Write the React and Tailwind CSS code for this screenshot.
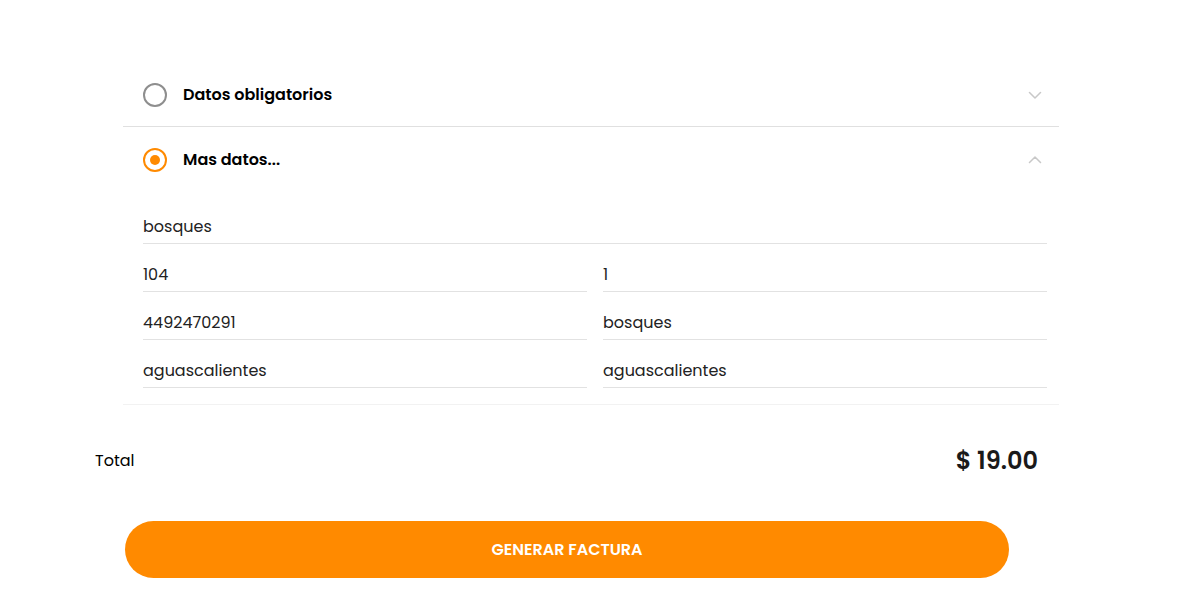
import React, { useState } from 'react'

const font = { fontFamily: '"Poppins", "Inter", "Noto Sans", sans-serif' }

function Chevron({ up }){
return (
<svg width="14" height="8" viewBox="0 0 14 8" fill="none" stroke="#c8c8c8" strokeWidth="1.5" strokeLinecap="round" strokeLinejoin="round">
{up ? <path d="M1.5 6.5l5.5-5.5 5.5 5.5" /> : <path d="M1.5 1.5l5.5 5.5 5.5-5.5" />}
</svg>
)
}

function Radio({ checked }){
return checked ? (
<span className="w-6 h-6 rounded-full border-2 border-[#ff8a00] flex items-center justify-center">
<span className="w-[10px] h-[10px] rounded-full bg-[#ff8a00]" />
</span>
) : (
<span className="w-6 h-6 rounded-full border-2 border-[#8e8e8e]" />
)
}

function Field({ value }){
return (
<div className="h-12 flex items-end pb-[4px] border-b border-[#e2e2e2] text-[16px] leading-6 text-[#222]">{value}</div>
)
}

export default function App(){
const [open, setOpen] = useState(1)
const items = ['Datos obligatorios', 'Mas datos...']

return (
<div className="w-[1204px] h-[614px] bg-white pt-[64px]" style={font}>
<div className="ml-[123px] w-[936px] border-b border-[#f2f2f2]">
{items.map((t, i) => (
<div key={t} className={i === 0 ? 'border-b border-[#e0e0e0]' : ''}>
<button onClick={() => setOpen(open === i ? -1 : i)} className={(i === 0 ? 'h-[62px]' : 'h-[66px]') + ' w-full flex items-center pl-5 pr-[17px] gap-4 cursor-pointer'}>
<Radio checked={open === i} />
<span className="text-[16px] font-semibold text-black flex-1 text-left">{t}</span>
<Chevron up={open === i} />
</button>
{open === 1 && i === 1 && (
<div className="pl-5 pr-3 pt-[3px] pb-4">
<Field value="bosques" />
<div className="grid grid-cols-2 gap-x-4">
<Field value="104" />
<Field value="1" />
<Field value="4492470291" />
<Field value="bosques" />
<Field value="aguascalientes" />
<Field value="aguascalientes" />
</div>
</div>
)}
</div>
))}
</div>

<div className="ml-[95px] w-[943px] mt-[40px] flex items-center justify-between h-[31px]">
<span className="text-[16px] text-black">Total</span>
<span className="text-[24px] font-semibold text-[#1a1a1a]">$ 19.00</span>
</div>

<button className="ml-[125px] mt-[45px] w-[884px] h-[57px] rounded-full bg-[#ff8a00] text-white text-[16px] font-semibold">GENERAR FACTURA</button>
</div>
)
}
